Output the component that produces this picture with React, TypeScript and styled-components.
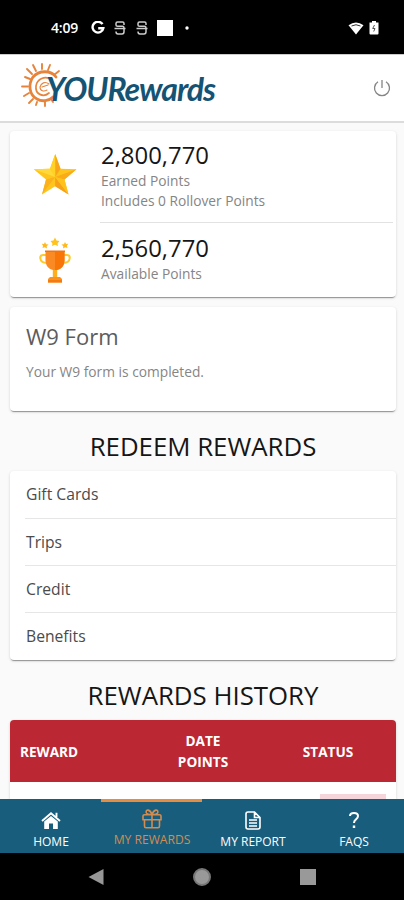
import React from "react";
import styled, { createGlobalStyle } from "styled-components";

const Global = createGlobalStyle`
  * { box-sizing: border-box; }
  html, body { margin: 0; background: #000; }
  body { font-family: "Open Sans", "Noto Sans", sans-serif; }
`;

const Screen = styled.div`
  width: 404px;
  height: 900px;
  display: flex;
  flex-direction: column;
  overflow: hidden;
  background: #fafafa;
`;

const StatusBar = styled.div`
  flex: 0 0 54px;
  display: flex;
  align-items: center;
  justify-content: space-between;
  padding: 2px 25px 0 51px;
  background: #000;
  color: #fff;
`;

const StatusGroup = styled.div<{ $gap: number }>`
  display: flex;
  align-items: center;
  gap: ${(p) => p.$gap}px;
`;

const Clock = styled.span`
  width: 30px;
  font: 600 14px/16px "Open Sans", sans-serif;
  letter-spacing: -0.2px;
  white-space: nowrap;
`;

const Header = styled.header`
  flex: 0 0 69px;
  display: flex;
  align-items: center;
  justify-content: space-between;
  padding: 0 13px 0 20px;
  background: #fff;
  border-top: 1px solid #ccc;
  border-bottom: 2px solid #dcdcdc;
`;

const LogoArt = styled.svg`
  display: block;
  overflow: visible;
`;

const Content = styled.main`
  flex: 1 1 0;
  min-height: 0;
  overflow: hidden;
  padding: 8px 8px 0 10px;
`;

const Card = styled.section<{ $height: number; $gap?: number }>`
  width: 386px;
  height: ${(p) => p.$height}px;
  margin-bottom: ${(p) => p.$gap ?? 0}px;
  overflow: hidden;
  background: #fff;
  border-radius: 4px;
  box-shadow: 0 2px 1px -1px rgba(0, 0, 0, 0.34), 0 1px 3px rgba(0, 0, 0, 0.16);
`;

const PointsRow = styled.div<{ $height: number }>`
  display: grid;
  grid-template-columns: 90px 1fr;
  height: ${(p) => p.$height}px;
  padding-right: 3px;
`;

const PointsIcon = styled.div<{ $top: number }>`
  display: flex;
  justify-content: center;
  align-items: flex-start;
  padding-top: ${(p) => p.$top}px;
`;

const PointsText = styled.div<{ $top: number; $line?: boolean }>`
  padding-top: ${(p) => p.$top}px;
  border-bottom: ${(p) => (p.$line ? "1px solid #e2e2e2" : "0")};
`;

const Amount = styled.div`
  height: 32px;
  margin-left: 1px;
  color: #161616;
  font-weight: 370;
  font-size: 23.9px;
  line-height: 32px;
`;

const Caption = styled.div`
  margin-left: 1px;
  color: #858585;
  font-weight: 370;
  font-size: 13.75px;
  line-height: 19.5px;
`;

const FormTitle = styled.h3`
  margin: 14px 0 0 16px;
  color: #5c5c5c;
  font-weight: 370;
  font-size: 22px;
  line-height: 30px;
`;

const FormText = styled.p`
  margin: 11px 0 0 16px;
  color: #858585;
  font-weight: 370;
  font-size: 13.75px;
  line-height: 20px;
`;

const Heading = styled.h2`
  width: 386px;
  height: 60px;
  margin: 0;
  padding-top: 18px;
  color: #161616;
  font-weight: 370;
  font-size: 25.8px;
  line-height: 35px;
  text-align: center;
  white-space: nowrap;
`;

const ListItem = styled.div`
  height: 47px;
  margin-left: 15px;
  padding-left: 1px;
  color: #4b4b4b;
  font-weight: 370;
  font-size: 15.7px;
  line-height: 46px;
  & + & { border-top: 1px solid #e6e6e6; }
`;

const TableHead = styled.div`
  display: grid;
  grid-template-columns: 128px 130px 120px;
  align-items: center;
  height: 62px;
  background: #bc2734;
  color: #fff;
  font-weight: 700;
  font-size: 13.6px;
  line-height: 21px;
  text-align: center;
`;

const FirstCell = styled.span`
  padding-left: 10px;
  text-align: left;
`;

const TableRow = styled.div`
  display: flex;
  justify-content: flex-end;
  padding: 12px 10px 0 0;
`;

const StatusChip = styled.span`
  width: 66px;
  height: 24px;
  background: #f5d5da;
`;

const Nav = styled.nav`
  flex: 0 0 54px;
  display: grid;
  grid-template-columns: repeat(4, 1fr);
  background: #195d7c;
`;

const Tab = styled.a<{ $active?: boolean }>`
  display: flex;
  flex-direction: column;
  align-items: center;
  padding: ${(p) => (p.$active ? "7px 0 0 1px" : "12px 0 0 1px")};
  border-top: ${(p) => (p.$active ? "3px solid #e78d40" : "0")};
  color: ${(p) => (p.$active ? "#d38c50" : "#fff")};
  font-size: ${(p) => (p.$active ? 12.1 : 12)}px;
  line-height: 16px;
  white-space: nowrap;
  & svg { margin-bottom: ${(p) => (p.$active ? 3 : 4)}px; }
`;

const SystemBar = styled.div`
  flex: 0 0 47px;
  display: flex;
  align-items: center;
  justify-content: space-between;
  padding: 0 88px;
  background: #000;
`;

const Logo = () => (
  <LogoArt width="198" height="66" viewBox="20 56 198 66">
    <g fill="none" stroke="#e7843b" strokeLinecap="round">
      <path d="M56 78C51 71 39 71 33 78C28 85 29 96 37 100C42 103 49 102 53 98" strokeWidth="2.8" />
      <path d="M52 81C45 76 37 80 36 87C35 95 43 99 49 94" strokeWidth="1.7" />
      <path d="M49 85C45 82 41 84 40 88C40 92 44 93 47 91M42 88L48 86" strokeWidth="1.1" />
      <path d="M22 87.5H28M25 78L30 80M27 70L32 75M33 66L36 72M42 65V70M50 66L48 71M59 72L54 76M24 97L29 94M29 104L33 100M37 103L36 106M45 103L45 107M51 100L53 103" strokeWidth="1.9" />
    </g>
    <text x="46" y="102" textLength="170" fill="#155374" fontFamily="Lato, sans-serif" fontSize="32" fontStyle="italic" fontWeight="700">YOURewards</text>
  </LogoArt>
);

const GoogleMark = () => (
  <svg width="14" height="14" viewBox="0 0 14 14">
    <path d="M11.5 3.2A5.4 5.4 0 1 0 12.3 7.2H7.2" fill="none" stroke="#fff" strokeWidth="2.4" />
  </svg>
);

const AppMark = () => (
  <svg width="12" height="14" viewBox="0 0 12 14" fill="none" stroke="#ccc" strokeWidth="1.5">
    <path d="M10 4V2.5Q10 1 8.5 1H3.5Q2 1 2 2.5V4Q2 5.3 3.5 5.3H8.5Q10 5.3 10 7V10.8Q10 13 8 13H4Q2 13 2 10.5M.5 7.6H11.5" />
  </svg>
);

const Star = () => (
  <svg width="44" height="42" viewBox="33.5 153 44 42">
    <path d="M55.7 154L61 168.7L77 169.3L65 179.4L69 194.5L55.7 186.2L42.5 194.5L46.5 179.4L34.2 169.3L50.5 168.7Z" fill="#ffc51c" />
    <path d="M55.7 154L61 168.7L55.7 177Z" fill="#f8a51a" />
    <path d="M77 169.3L65 179.4L55.7 177Z" fill="#f9ac17" />
    <path d="M69 194.5L55.7 186.2V177Z" fill="#f7a01a" />
    <path d="M42.5 194.5L46.5 179.4L55.7 177Z" fill="#fab11d" />
    <path d="M34.2 169.3L50.5 168.7L55.7 177Z" fill="#ffd83a" />
    <path d="M65 179.4L69 194.5L55.7 177Z" fill="#ffc21c" />
    <path d="M55.7 154V177L50.5 168.7Z" fill="#ffd225" />
  </svg>
);

const Trophy = () => (
  <svg width="32" height="47" viewBox="39.5 237 32 47">
    <path d="M55.5 237.5L57 240.5L60 241L58 243.4L58.5 246L55.5 244.8L52.5 246L53 243.4L51 241L54 240.5Z" fill="#ffc31b" />
    <path d="M45.5 242L46.6 244.2L49 244.5L47.2 246.2L47.5 248.5L45.3 247.3L43 248L43.6 245.8L42.2 243.8L44.5 244ZM65.5 242L64.4 244.2L62 244.5L63.8 246.2L63.5 248.5L65.7 247.3L68 248L67.4 245.8L68.8 243.8L66.5 244Z" fill="#ffb91d" />
    <path d="M47 255H43.5Q40.7 255 40.7 258Q41.3 263 47.5 263M64 255H67.5Q70.3 255 70.3 258Q69.7 263 63.5 263" fill="none" stroke="#ffc928" strokeWidth="2" />
    <path d="M46 251H65V261Q64 269 57.5 270V278H53.5V270Q47 269 46 261Z" fill="#fa8b24" />
    <path d="M55.5 251H65V261Q64 269 57.5 270V278H55.5Z" fill="#f87507" />
    <path d="M45.5 250.5H65.5V252H45.5Z" fill="#ef7417" />
    <path d="M53.3 270H57.7V278H53.3Z" fill="#ffae1d" />
    <path d="M50.5 277H60.5L62.5 279V282.5H48.5V279Z" fill="#fb911e" />
    <path d="M48.5 280H62.5V282.5H48.5Z" fill="#f47b10" />
  </svg>
);

const HomeIcon = () => (
  <svg width="20" height="19" viewBox="0 0 20 19" fill="#fff">
    <path d="M3.2 10.5L10 5L16.8 10.5V18H12V12.5H8V18H3.2Z" />
    <path d="M1 10L10 2.3L19 10M15.5 6V1.8" fill="none" stroke="#fff" strokeWidth="1.9" />
  </svg>
);

const GiftIcon = () => (
  <svg width="20" height="20" viewBox="0 0 20 20" fill="none" stroke="currentColor" strokeWidth="1.6">
    <path d="M2.5 11V17Q2.5 18.7 4 18.7H16Q17.5 18.7 17.5 17V11M2.5 5.7H17.5Q19 5.7 19 7V10.8H1V7Q1 5.7 2.5 5.7ZM10 6V18.5M10 5.5C8 0 3.7 0 4.2 3.5Q4.5 5.5 10 5.5M10 5.5C12 0 16.3 0 15.8 3.5Q15.5 5.5 10 5.5" />
  </svg>
);

const ReportIcon = () => (
  <svg width="16" height="19" viewBox="0 0 16 19" fill="none" stroke="#fff" strokeWidth="1.6">
    <path d="M1 3Q1 1 3 1H9.5L15 6.5V16Q15 18 13 18H3Q1 18 1 16ZM9.5 1V6.5H15M4 9H12M4 12H12M4 15H12" />
  </svg>
);

const QuestionIcon = () => (
  <svg width="14" height="19" viewBox="0 0 14 19">
    <path d="M3 5Q3 2 7 2Q11 2 11 5Q11 7 9 8.3Q7 9.6 7 12" fill="none" stroke="#fff" strokeWidth="2" />
    <path d="M5.8 14.5H8.2V17H5.8Z" fill="#fff" />
  </svg>
);

const rewards = ["Gift Cards", "Trips", "Credit", "Benefits"];

export default function App() {
  return (
    <>
      <Global />
      <Screen>
        <StatusBar>
          <StatusGroup $gap={9.6}>
            <Clock>4:09</Clock>
            <GoogleMark />
            <AppMark />
            <AppMark />
            <svg width="16" height="16" viewBox="0 0 16 16"><path d="M0 0H16V16H0Z" fill="#fff" /></svg>
            <svg width="8" height="4" viewBox="0 0 8 4"><circle cx="4" cy="2" r="1.7" fill="#fff" /></svg>
          </StatusGroup>
          <StatusGroup $gap={5}>
            <svg width="16" height="13" viewBox="0 0 16 13">
              <path d="M.5 3.2Q8-2.2 15.5 3.2L8 12.5Z" fill="#fff" />
              <path d="M3.5 4Q8 1.5 12.5 4" fill="none" stroke="#333" strokeWidth="1" />
            </svg>
            <svg width="10" height="14" viewBox="0 0 10 14">
              <path d="M3 0H7V1.5H9.5V12.5Q9.5 13.5 8.5 13.5H1.5Q.5 13.5 .5 12.5V1.5H3Z" fill="#fff" />
              <path d="M5.5 4L3.7 7.5H6L4.7 10.5" fill="none" stroke="#555" />
            </svg>
          </StatusGroup>
        </StatusBar>
        <Header>
          <Logo />
          <svg width="18" height="18" viewBox="0 0 18 18" fill="none" stroke="#858585" strokeWidth="1.3">
            <path d="M5 2.8A7.5 7.5 0 1 0 13 2.8M9 1V9" />
          </svg>
        </Header>
        <Content>
          <Card $height={166} $gap={10}>
            <PointsRow $height={92}>
              <PointsIcon $top={22}><Star /></PointsIcon>
              <PointsText $top={8} $line>
                <Amount>2,800,770</Amount>
                <Caption>Earned Points</Caption>
                <Caption>Includes 0 Rollover Points</Caption>
              </PointsText>
            </PointsRow>
            <PointsRow $height={74}>
              <PointsIcon $top={14}><Trophy /></PointsIcon>
              <PointsText $top={9}>
                <Amount>2,560,770</Amount>
                <Caption>Available Points</Caption>
              </PointsText>
            </PointsRow>
          </Card>
          <Card $height={104}>
            <FormTitle>W9 Form</FormTitle>
            <FormText>Your W9 form is completed.</FormText>
          </Card>
          <Heading>REDEEM REWARDS</Heading>
          <Card $height={189}>
            {rewards.map((name) => <ListItem key={name}>{name}</ListItem>)}
          </Card>
          <Heading>REWARDS HISTORY</Heading>
          <Card $height={120}>
            <TableHead>
              <FirstCell>REWARD</FirstCell>
              <span>DATE<br />POINTS</span>
              <span>STATUS</span>
            </TableHead>
            <TableRow><StatusChip /></TableRow>
          </Card>
        </Content>
        <Nav>
          <Tab><HomeIcon />HOME</Tab>
          <Tab $active><GiftIcon />MY REWARDS</Tab>
          <Tab><ReportIcon />MY REPORT</Tab>
          <Tab><QuestionIcon />FAQS</Tab>
        </Nav>
        <SystemBar>
          <svg width="16" height="18" viewBox="0 0 16 18"><path d="M15.5 1V17L.5 9Z" fill="#979797" /></svg>
          <svg width="20" height="20" viewBox="0 0 20 20"><circle cx="10" cy="10" r="8" fill="#999" stroke="#777" strokeWidth="2" /></svg>
          <svg width="16" height="16" viewBox="0 0 16 16"><path d="M0 0H16V16H0Z" fill="#999" /></svg>
        </SystemBar>
      </Screen>
    </>
  );
}
